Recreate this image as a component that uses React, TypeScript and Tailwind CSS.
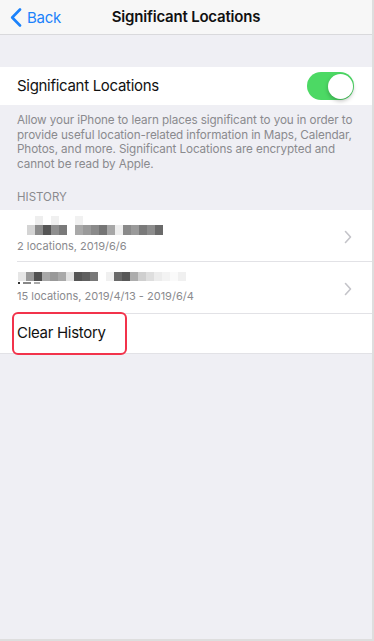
import React, { useState } from 'react';

const row1Blocks = ['#d4d4d4', '#8c8c8c', '#555555', '#8f8f8f', '#7a7a7a', '#ffffff', '#a9a9a9', '#9a9a9a', '#8a8a8a', '#757575', '#a7a7a7', '#eeeeee', '#8a8a8a', '#9a9a9a', '#7a7a7a', '#8c8c8c', '#6a6a6a'];
const row1Top = ['#ffffff', '#eeeeee', '#ffffff', '#f0f0f0', '#ffffff', '#ffffff', '#f1f1f1'];
const row2Blocks = ['#e6e6e6', '#9a9a9a', '#505050', '#a8a8a8', '#999999', '#a9a9a9', '#e2e2e2', '#555555', '#5f5f5f', '#787878', '#ffffff', '#f0f0f0', '#6a6a6a', '#585858', '#adadad', '#cfcfcf', '#dedede', '#ececec', '#f3f3f3', '#fafafa', '#f0f0f0'];

const Chevron = () => (
  <svg width="8" height="14" viewBox="0 0 8 14" fill="none">
    <path d="M1.5 1.5 L6.5 7 L1.5 12.5" stroke="#c4c4c9" strokeWidth="1.6" strokeLinecap="round" strokeLinejoin="round" />
  </svg>
);

const Blur = ({ colors, x, h = 10 }: { colors: string[]; x: number; h?: number }) => (
  <div className="flex" style={{ marginLeft: x }}>
    {colors.map((c, i) => (
      <div key={i} className="w-[8px]" style={{ backgroundColor: c, height: h }} />
    ))}
  </div>
);

export default function App() {
  const [enabled, setEnabled] = useState(true);

  return (
    <div className="w-[374px] h-[641px] bg-[#dedede] overflow-hidden" style={{ fontFamily: 'Inter, "Liberation Sans", sans-serif' }}>
      <div className="w-[372px] h-[639px] bg-[#efeff4] flex flex-col">
        {/* nav */}
        <div className="h-[35px] bg-[#f7f7f7] border-b border-[#d9d9dc] flex items-center relative">
          <button className="flex items-center gap-[5px] pl-[10px] text-[#1b82fb] text-[15px] tracking-[-0.3px] leading-none">
            <svg width="12" height="19" viewBox="0 0 12 19" fill="none">
              <path d="M10 1.5 L2.2 9.5 L10 17.5" stroke="#1b82fb" strokeWidth="2.6" strokeLinecap="round" strokeLinejoin="round" />
            </svg>
            <span>Back</span>
          </button>
          <div className="absolute left-0 right-0 text-center text-[15px] tracking-[-0.2px] font-semibold text-[#111] pointer-events-none">Significant Locations</div>
        </div>

        <div className="h-[32px]" />

        {/* toggle row */}
        <div className="h-[38px] bg-white flex items-center justify-between pl-[17px] pr-[18px]">
          <span className="text-[15px] tracking-[-0.3px] text-[#111]">Significant Locations</span>
          <button
            onClick={() => setEnabled(!enabled)}
            className={`w-[47px] h-[28px] rounded-full relative ${enabled ? 'bg-[#4cd964]' : 'bg-[#e5e5ea]'}`}
          >
            <span className={`absolute top-[1.5px] w-[25px] h-[25px] rounded-full bg-white shadow-[0_2px_4px_rgba(0,0,0,0.25)] ${enabled ? 'right-[1.5px]' : 'left-[1.5px]'}`} />
          </button>
        </div>

        <div className="px-[17px] pt-[8px] text-[11.7px] tracking-[-0.1px] leading-[14.5px] text-[#8a8a8e] whitespace-nowrap">
          <div>Allow your iPhone to learn places significant to you in order to</div>
          <div>provide useful location-related information in Maps, Calendar,</div>
          <div>Photos, and more. Significant Locations are encrypted and</div>
          <div>cannot be read by Apple.</div>
        </div>

        <div className="px-[17px] pt-[19px] pb-[5px] text-[11.5px] leading-[15px] text-[#8a8a8e]">HISTORY</div>

        {/* history list */}
        <div className="bg-white relative">
          <div className="h-[51px] flex justify-between pl-[17px] pr-[20px]">
            <div className="flex flex-col">
              <div className="h-[25px] flex flex-col justify-end">
                <Blur colors={row1Top} x={10} h={9} />
                <Blur colors={row1Blocks} x={10} />
              </div>
              <span className="text-[11px] leading-[16px] text-[#8a8a8e] mt-[3px]">2 locations, 2019/6/6</span>
            </div>
            <div className="flex items-center pt-[3px]">
              <Chevron />
            </div>
          </div>
          <div className="ml-[17px] h-px bg-[#e2e2e6]" />
          <div className="h-[51px] flex justify-between pl-[17px] pr-[20px]">
            <div className="flex flex-col">
              <div className="h-[25px] pt-[10px] flex flex-col">
                <Blur colors={row2Blocks} x={1} h={9} />
                <div className="h-[4px] ml-[1px] pt-[1px] flex gap-[3px]">
                  <div className="w-[2px] h-[2px] bg-[#333]" />
                  <div className="w-[8px] h-[2px] bg-[#888]" />
                  <div className="w-[6px] h-[2px] bg-[#aaa]" />
                </div>
              </div>
              <span className="text-[11px] leading-[16px] text-[#8a8a8e] mt-[1px]">15 locations, 2019/4/13 - 2019/6/4</span>
            </div>
            <div className="flex items-center pt-[2px]">
              <Chevron />
            </div>
          </div>
          <div className="ml-[17px] h-px bg-[#e2e2e6]" />
          <div className="h-[39px] flex items-center pl-[17px]">
            <span className="text-[15px] tracking-[-0.3px] text-[#111]">Clear History</span>
          </div>
          <div className="absolute left-[12px] top-[102px] w-[115px] h-[43px] border-2 border-[#f2334b] rounded-[6px] pointer-events-none" />
        </div>
        <div className="h-px bg-[#e2e2e6]" />
      </div>
    </div>
  );
}
